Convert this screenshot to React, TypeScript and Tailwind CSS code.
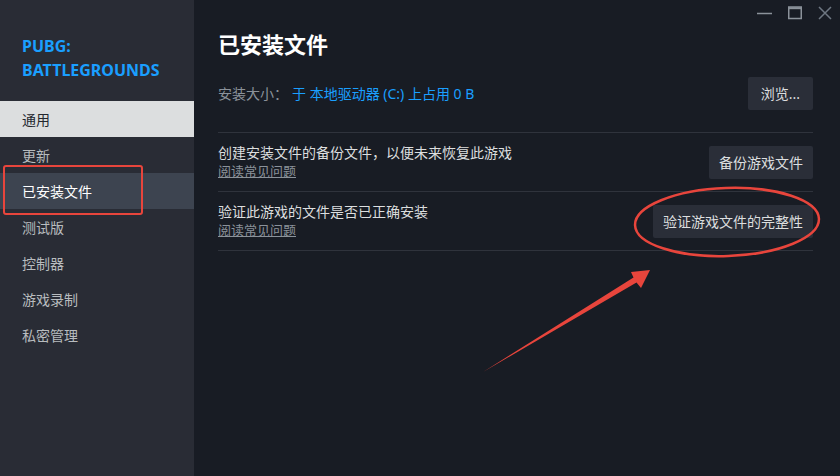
const font = "font-['Noto_Sans','Noto_Sans_CJK_SC',sans-serif]";

const navItems = ["通用", "更新", "已安装文件", "测试版", "控制器", "游戏录制", "私密管理"];

function Sidebar() {
  return (
    <aside className="relative w-[194px] shrink-0 bg-[#292c35]">
      <div className="px-[22px] pt-[34px] pb-[19px] text-[16px] font-bold leading-[24px] text-[#1a9fff]">
        <div>PUBG:</div>
        <div>BATTLEGROUNDS</div>
      </div>
      <nav className="flex flex-col">
        {navItems.map((item, i) => (
          <div
            key={item}
            className={
              "flex h-[36px] items-center px-[22px] text-[14px] " +
              (i === 0
                ? "bg-[#dcdedf] text-[#23262e]"
                : i === 2
                ? "bg-[#3d4450] text-white"
                : "text-[#b8bcbf]")
            }
          >
            {item}
          </div>
        ))}
      </nav>
      {/* annotation box */}
      <div className="absolute left-[3px] top-[165px] h-[50px] w-[140px] rounded-[3px] border-2 border-[#e8453c]" />
    </aside>
  );
}

function Btn({ children, className = "" }: { children: React.ReactNode; className?: string }) {
  return (
    <button
      className={
        "h-[33px] rounded-[2px] bg-[#2a2e38] px-[10px] text-[14px] text-[#dcdedf] " + className
      }
    >
      {children}
    </button>
  );
}

function Row({ text, button }: { text: string; button: string }) {
  return (
    <div className="flex items-center justify-between border-b border-[#2f333c] py-[11px]">
      <div className="flex flex-col">
        <span className="text-[14px] leading-[18px] text-[#dcdedf]">{text}</span>
        <span className="text-[13px] leading-[18px] text-[#8b929a] underline">阅读常见问题</span>
      </div>
      <Btn>{button}</Btn>
    </div>
  );
}

function WindowControls() {
  return (
    <div className="absolute right-[8px] top-[6px] flex items-center gap-[16px] text-[#8b929a]">
      <svg width="15" height="14" viewBox="0 0 15 14">
        <line x1="0" y1="7.5" x2="15" y2="7.5" stroke="#8b929a" strokeWidth="1.5" />
      </svg>
      <svg width="14" height="14" viewBox="0 0 14 14">
        <rect x="0.75" y="1" width="12.5" height="11.5" fill="none" stroke="#8b929a" strokeWidth="1.5" />
        <line x1="0.75" y1="2.2" x2="13.25" y2="2.2" stroke="#8b929a" strokeWidth="2" />
      </svg>
      <svg width="14" height="14" viewBox="0 0 14 14">
        <path d="M1 1 L13 13 M13 1 L1 13" stroke="#6e7782" strokeWidth="1.5" />
      </svg>
    </div>
  );
}

export default function App() {
  return (
    <div className={`relative flex h-[476px] w-[840px] overflow-hidden bg-[#181c24] ${font}`}>
      <Sidebar />
      <main className="relative flex-1 pl-[24px] pr-[27px]">
        <WindowControls />
        <h1 className="pt-[29px] text-[22px] font-bold leading-[30px] text-white">已安装文件</h1>
        <div className="mt-[18px] flex items-center justify-between pb-[22px]">
          <div className="text-[14px]">
            <span className="text-[#8b929a]">安装大小：</span>
            <span className="ml-[4px] text-[#1a9fff]">于 本地驱动器 (C:) 上占用 0 B</span>
          </div>
          <Btn className="!px-[13px]">浏览...</Btn>
        </div>
        <div className="border-t border-[#2f333c]">
          <Row text="创建安装文件的备份文件，以便未来恢复此游戏" button="备份游戏文件" />
          <Row text="验证此游戏的文件是否已正确安装" button="验证游戏文件的完整性" />
        </div>
      </main>
      {/* annotations */}
      <svg className="pointer-events-none absolute left-0 top-0" width="840" height="476" viewBox="0 0 840 476">
        <ellipse cx="727" cy="222" rx="92" ry="34" fill="none" stroke="#e8453c" strokeWidth="2.5" transform="rotate(-2 727 222)" />
        <polygon points="483,372 633.5,277.5 631,272 650,270 641,288 636.5,282.5" fill="#e8453c" />
      </svg>
    </div>
  );
}
